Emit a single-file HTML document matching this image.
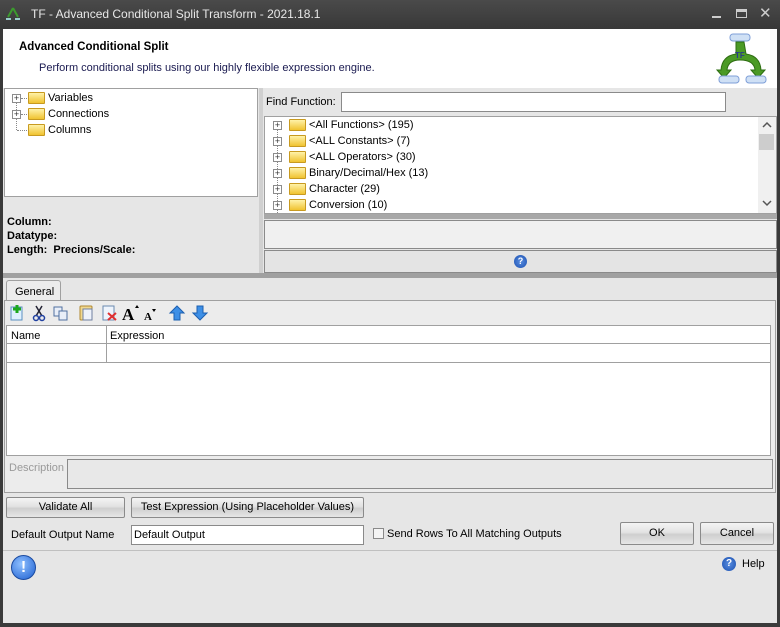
<!DOCTYPE html>
<html><head><style>
*{margin:0;padding:0;box-sizing:border-box}
body{width:780px;height:627px;background:#3a3a3a;font-family:"Liberation Sans","DejaVu Sans",sans-serif;font-size:11px;color:#000;position:relative;overflow:hidden}
.a{position:absolute}
.btn{position:absolute;border:1px solid #8a8a8a;border-radius:2px;background:linear-gradient(#f4f4f4,#e2e2e2 45%,#cfcfcf 55%,#e6e6e6);text-align:center;font-size:11px;line-height:19px}
.pm{position:absolute;width:9px;height:9px;border:1px solid #8c8c8c;background:#fff;font-size:9px;line-height:7px;text-align:center;color:#333}
.fd{position:absolute;width:17px;height:12px;background:linear-gradient(#fff2a8,#f0c330);border:1px solid #c89a20;border-radius:1px}
.dot{position:absolute;border-top:1px dotted #888}
.vdot{position:absolute;border-left:1px dotted #888}
</style></head><body>
<div class="a" style="left:0;top:0;width:780px;height:29px;background:linear-gradient(#4a4a4a,#383838)"></div>
<svg class="a" style="left:5px;top:7px" width="16" height="14"><path d="M8 1 L3 10 M8 1 L13 10" stroke="#3c9a2e" stroke-width="2" fill="none"/><rect x="1" y="11" width="5" height="2" fill="#9cc"/><rect x="10" y="11" width="5" height="2" fill="#9cc"/></svg>
<div class="a" style="left:31px;top:7px;color:#e8e8e8;font-size:12px">TF - Advanced Conditional Split Transform - 2021.18.1</div>
<div class="a" style="left:712px;top:16px;width:9px;height:2px;background:#ccc"></div>
<div class="a" style="left:736px;top:9px;width:11px;height:9px;border:1px solid #ccc;border-top:3px solid #ccc"></div>
<div class="a" style="left:759px;top:4px;color:#ccc;font-size:15px;font-weight:bold">✕</div>
<div class="a" style="left:3px;top:29px;width:774px;height:594px;background:#e6e6e6"></div>
<div class="a" style="left:3px;top:29px;width:774px;height:59px;background:#fff"></div>
<div class="a" style="left:19px;top:41px;font-weight:bold;font-size:11.5px">Advanced Conditional Split</div>
<div class="a" style="left:39px;top:62px;color:#1a1a50">Perform conditional splits using our highly flexible expression engine.</div>
<svg class="a" style="left:716px;top:32px" width="54" height="52"><rect x="14" y="2" width="20" height="7" rx="3" fill="#cfe0f5" stroke="#7f9fd8"/><path d="M20 10 L28 10 L30 22 Q44 24 45 38 L49 38 L42 46 L35 38 L39 38 Q38 28 24 28 Q12 28 11 38 L15 38 L8 46 L1 38 L5 38 Q6 24 20 22 Z" fill="#4b9a25" stroke="#2e6e12"/><text x="19" y="26" font-size="8" font-weight="bold" fill="#2a3a8a" font-family="Liberation Sans">TF</text><rect x="3" y="44" width="20" height="7" rx="3" fill="#cfe0f5" stroke="#7f9fd8"/><rect x="30" y="44" width="20" height="7" rx="3" fill="#cfe0f5" stroke="#7f9fd8"/></svg>
<div class="a" style="left:4px;top:88px;width:254px;height:109px;background:#fff;border:1px solid #a0a0a0"></div>
<div class="vdot" style="left:16px;top:103px;height:27px"></div>
<div class="pm" style="left:12px;top:94px">+</div><div class="dot" style="left:21px;top:98px;width:6px"></div><div class="fd" style="left:28px;top:92px"></div><div class="a" style="left:48px;top:92px">Variables</div>
<div class="pm" style="left:12px;top:110px">+</div><div class="dot" style="left:21px;top:114px;width:6px"></div><div class="fd" style="left:28px;top:108px"></div><div class="a" style="left:48px;top:108px">Connections</div>
<div class="dot" style="left:17px;top:130px;width:10px"></div><div class="fd" style="left:28px;top:124px"></div><div class="a" style="left:48px;top:124px">Columns</div>
<div class="a" style="left:7px;top:215px;font-weight:bold;line-height:14px">Column:<br>Datatype:<br>Length:&nbsp; Precions/Scale:</div>
<div class="a" style="left:259px;top:88px;width:4px;height:185px;background:#d0d0d0"></div>
<div class="a" style="left:266px;top:96px">Find Function:</div>
<div class="a" style="left:341px;top:92px;width:385px;height:20px;background:#fff;border:1px solid #8a8a8a"></div>
<div class="a" style="left:264px;top:116px;width:513px;height:98px;background:#fff;border:1px solid #a0a0a0"></div>
<div class="a" style="left:758px;top:117px;width:18px;height:96px;background:#f0f0f0"></div>
<div class="a" style="left:759px;top:134px;width:15px;height:16px;background:#cdcdcd"></div>
<svg class="a" style="left:761px;top:121px" width="12" height="8"><path d="M2 6 L6 2 L10 6" stroke="#555" stroke-width="1.5" fill="none"/></svg>
<svg class="a" style="left:761px;top:199px" width="12" height="8"><path d="M2 2 L6 6 L10 2" stroke="#555" stroke-width="1.5" fill="none"/></svg>
<div class="vdot" style="left:277px;top:125px;height:88px"></div>
<div class="pm" style="left:273px;top:121px">+</div><div class="fd" style="left:289px;top:119px"></div><div class="a" style="left:309px;top:119px">&lt;All Functions&gt; (195)</div>
<div class="pm" style="left:273px;top:137px">+</div><div class="fd" style="left:289px;top:135px"></div><div class="a" style="left:309px;top:135px">&lt;ALL Constants&gt; (7)</div>
<div class="pm" style="left:273px;top:153px">+</div><div class="fd" style="left:289px;top:151px"></div><div class="a" style="left:309px;top:151px">&lt;ALL Operators&gt; (30)</div>
<div class="pm" style="left:273px;top:169px">+</div><div class="fd" style="left:289px;top:167px"></div><div class="a" style="left:309px;top:167px">Binary/Decimal/Hex (13)</div>
<div class="pm" style="left:273px;top:185px">+</div><div class="fd" style="left:289px;top:183px"></div><div class="a" style="left:309px;top:183px">Character (29)</div>
<div class="pm" style="left:273px;top:201px">+</div><div class="fd" style="left:289px;top:199px"></div><div class="a" style="left:309px;top:199px">Conversion (10)</div>
<div class="a" style="left:264px;top:214px;width:513px;height:5px;background:#a8a8a8"></div>
<div class="a" style="left:264px;top:220px;width:513px;height:29px;background:#f0f0f0;border:1px solid #8a8a8a"></div>
<div class="a" style="left:264px;top:250px;width:513px;height:23px;background:#e4e4e4;border:1px solid #8a8a8a"></div>
<div class="a" style="left:514px;top:255px;width:13px;height:13px;border-radius:50%;background:radial-gradient(#5a8ee0,#1a4fb0);color:#fff;font-size:9px;font-weight:bold;text-align:center;line-height:13px">?</div>
<div class="a" style="left:3px;top:273px;width:774px;height:5px;background:#a0a0a0"></div>
<div class="a" style="left:6px;top:280px;width:55px;height:21px;background:#ececec;border:1px solid #a0a0a0;border-bottom:none;border-radius:3px 3px 0 0;padding:5px 0 0 8px">General</div>
<div class="a" style="left:4px;top:300px;width:772px;height:193px;border:1px solid #a0a0a0;background:#ececec"></div>
<svg class="a" style="left:9px;top:304px" width="205" height="18">
<rect x="2" y="3" width="11" height="13" fill="#dff0ff" stroke="#5b8fc0"/><path d="M8 1v8M4 5h8" stroke="#1ca81c" stroke-width="3"/>
<path d="M27 2 L33 12 M33 2 L27 12" stroke="#223" stroke-width="1.5"/><circle cx="27" cy="14" r="2.5" fill="none" stroke="#2040a0" stroke-width="1.5"/><circle cx="33" cy="14" r="2.5" fill="none" stroke="#2040a0" stroke-width="1.5"/>
<rect x="45" y="3" width="8" height="9" fill="#e8eef8" stroke="#5070a0"/><rect x="50" y="7" width="8" height="9" fill="#e8eef8" stroke="#5070a0"/>
<rect x="71" y="2" width="12" height="14" rx="1" fill="#f0d890" stroke="#b08830"/><rect x="74" y="5" width="9" height="11" fill="#eef2fa" stroke="#7080a0"/>
<rect x="94" y="2" width="11" height="14" fill="#eef4fc" stroke="#6a8ab0"/><path d="M99 9 L107 16 M107 9 L99 16" stroke="#e03030" stroke-width="2"/>
<text x="113" y="16" font-family="Liberation Serif" font-weight="bold" font-size="17">A</text><path d="M126 4 l2 -3 l2 3z" fill="#000"/>
<text x="135" y="16" font-family="Liberation Serif" font-weight="bold" font-size="11">A</text><path d="M143 5 l2 3 l2 -3z" fill="#000"/>
<path d="M168 2 L175 9 L171 9 L171 16 L165 16 L165 9 L161 9 Z" fill="#3d8fe6" stroke="#1c5fb0"/>
<path d="M191 16 L198 9 L194 9 L194 2 L188 2 L188 9 L184 9 Z" fill="#3d8fe6" stroke="#1c5fb0"/>
</svg>
<div class="a" style="left:6px;top:325px;width:765px;height:131px;background:#fff;border:1px solid #a0a0a0"></div>
<div class="a" style="left:7px;top:326px;width:763px;height:18px;background:#fff;border-bottom:1px solid #a0a0a0"></div>
<div class="a" style="left:106px;top:326px;width:1px;height:37px;background:#a0a0a0"></div>
<div class="a" style="left:7px;top:362px;width:763px;height:1px;background:#a0a0a0"></div>
<div class="a" style="left:11px;top:330px">Name</div><div class="a" style="left:110px;top:330px">Expression</div>
<div class="a" style="left:9px;top:462px;color:#9a9a9a">Description</div>
<div class="a" style="left:67px;top:459px;width:706px;height:30px;background:#e8e8e8;border:1px solid #8a8a8a"></div>
<div class="btn" style="left:6px;top:497px;width:119px;height:21px">Validate All</div>
<div class="btn" style="left:131px;top:497px;width:233px;height:21px">Test Expression (Using Placeholder Values)</div>
<div class="a" style="left:11px;top:529px">Default Output Name</div>
<div class="a" style="left:131px;top:525px;width:233px;height:20px;background:#fff;border:1px solid #8a8a8a;padding:3px 2px">Default Output</div>
<div class="a" style="left:373px;top:528px;width:11px;height:11px;border:1px solid #8a8a8a;background:#f4f4f4"></div>
<div class="a" style="left:387px;top:528px">Send Rows To All Matching Outputs</div>
<div class="btn" style="left:620px;top:522px;width:74px;height:23px;line-height:21px">OK</div>
<div class="btn" style="left:700px;top:522px;width:74px;height:23px;line-height:21px">Cancel</div>
<div class="a" style="left:3px;top:550px;width:774px;height:1px;background:#c0c0c0"></div>
<div class="a" style="left:11px;top:555px;width:25px;height:25px;border-radius:50%;background:radial-gradient(circle at 40% 35%,#8fc0ff,#1d5fd0);border:1px solid #1a4aa0;color:#fff;font-weight:bold;font-size:16px;text-align:center;line-height:23px">!</div>
<div class="a" style="left:722px;top:557px;width:14px;height:14px;border-radius:50%;background:radial-gradient(#5a8ee0,#1a4fb0);color:#fff;font-size:10px;font-weight:bold;text-align:center;line-height:14px">?</div>
<div class="a" style="left:742px;top:558px">Help</div>
</body></html>
